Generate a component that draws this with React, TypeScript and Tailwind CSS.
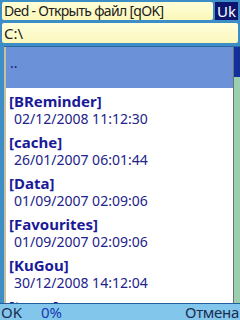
import React from 'react';

const entries = [
  { name: '[BReminder]', date: '02/12/2008 11:12:30' },
  { name: '[cache]', date: '26/01/2007 06:01:44' },
  { name: '[Data]', date: '01/09/2007 02:09:06' },
  { name: '[Favourites]', date: '01/09/2007 02:09:06' },
  { name: '[KuGou]', date: '30/12/2008 14:12:04' },
  { name: '[temp]', date: '' },
];

const App: React.FC = () => {
  return (
    <div className="w-[240px] h-[320px] bg-[#3d8ec6] flex flex-col overflow-hidden font-['Noto_Sans',sans-serif]">
      {/* title */}
      <div className="mt-[2px] mx-[2px] h-[18px] flex gap-[2px]">
        <div className="flex-1 bg-gradient-to-b from-[#ffffd8] to-[#fbf7b8] rounded-[2px] px-[2px] flex items-center text-[14px] tracking-[-0.7px] leading-none text-[#202020] whitespace-nowrap overflow-hidden">
          Ded - Открыть файл [qOK]
        </div>
        <div className="w-[23px] bg-[#0c1670] text-white text-[15px] leading-none flex items-center justify-center">
          Uk
        </div>
      </div>

      {/* path */}
      <div className="mt-[3px] mx-[2px] h-[20px] bg-gradient-to-b from-[#ffffdc] to-[#fbf7bc] rounded-[2px] px-[2px] flex items-center text-[15px] leading-none text-[#202020]">
        C:\
      </div>

      {/* list */}
      <div className="mt-[3px] ml-[4px] flex-1 flex min-h-0 border-t border-[#2a6aa0]">
        <div className="w-[2px] bg-[#c8c0a0]" />
        <div className="flex-1 bg-white overflow-hidden">
          <div className="h-[41px] bg-[#6b92d9] px-[4px] pt-[9px] text-[14px] leading-none text-[#1a1a80]">..</div>
          {entries.map((e) => (
            <div key={e.name} className="h-[41px] pl-[3px] pt-[4px]">
              <div className="text-[15px] leading-[18px] font-bold text-[#1a1a98]">{e.name}</div>
              {e.date && <div className="pl-[5px] text-[14px] leading-[18px] text-[#22228a]">{e.date}</div>}
            </div>
          ))}
        </div>
        <div className="w-[1px] bg-[#707070]" />
        <div className="w-[6px] bg-[#9ccfb0] flex flex-col">
          <div className="h-[30px] bg-[#12309a]" />
        </div>
      </div>

      {/* softkeys */}
      <div className="h-[17px] border-t border-[#1f5fa0] bg-[#82c6ec] flex items-center px-[1px] text-[15px] leading-[16px]">
        <span className="text-[#1c2c50]">OK</span>
        <span className="ml-[19px] text-[#1a3ab0]">0%</span>
        <span className="ml-auto tracking-[-0.3px] text-[#1c2c50]">Отмена</span>
      </div>
    </div>
  );
};

export default App;
